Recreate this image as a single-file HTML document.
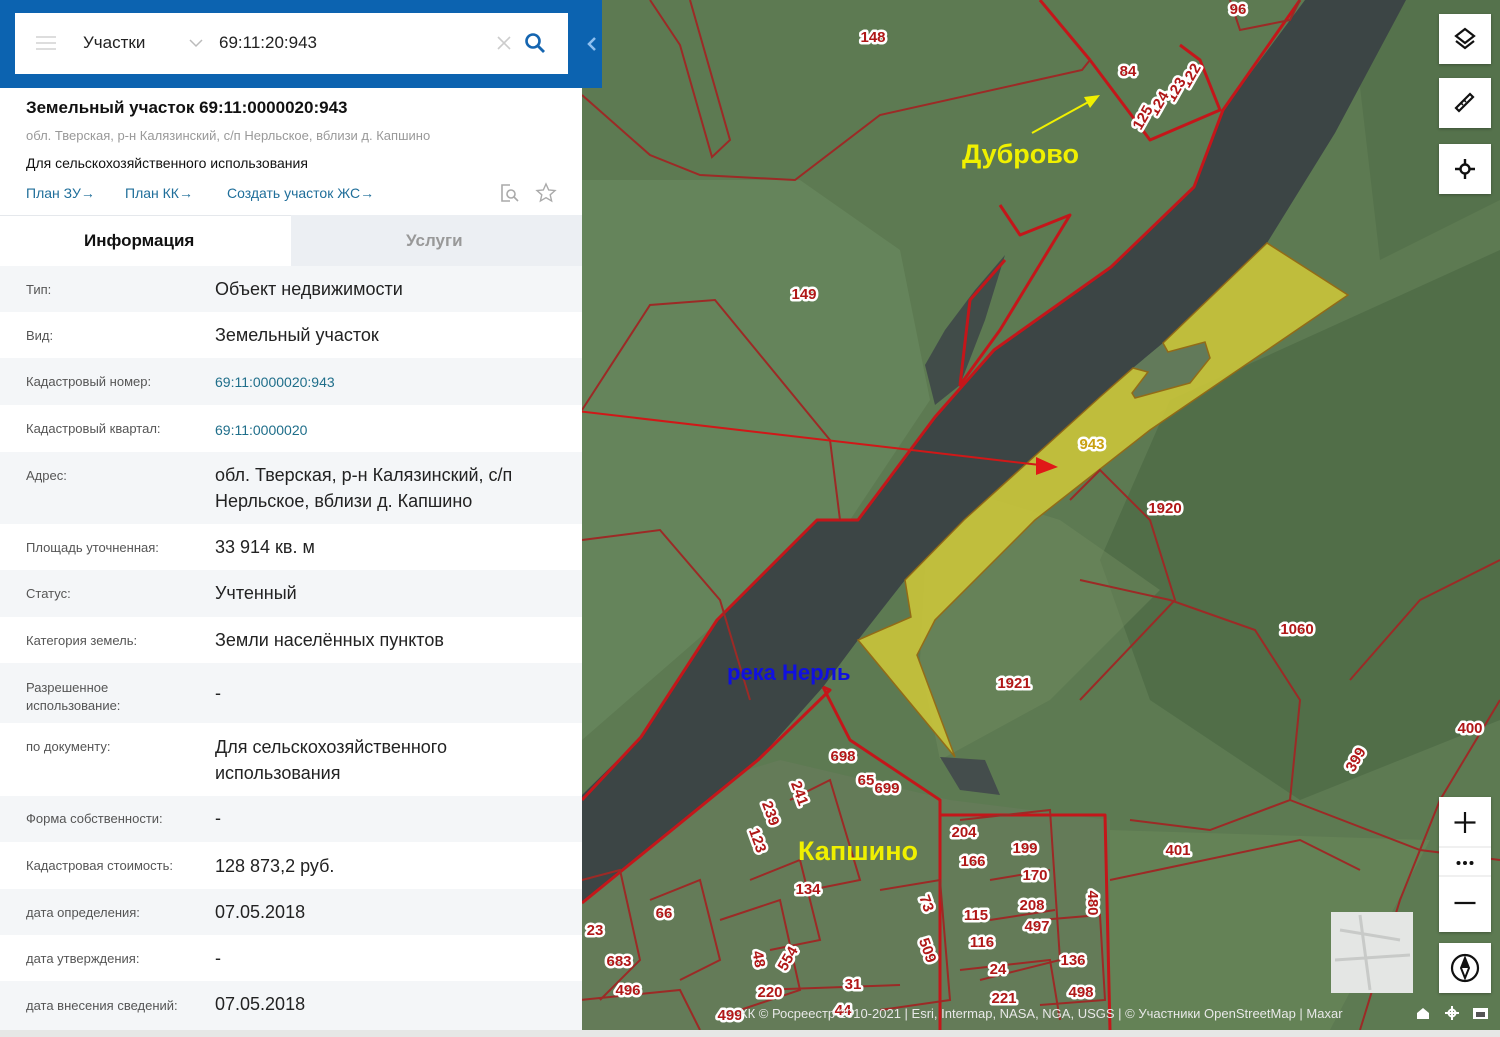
<!DOCTYPE html>
<html><head><meta charset="utf-8"><style>
*{margin:0;padding:0;box-sizing:border-box}
body{width:1500px;height:1037px;overflow:hidden;position:relative;font-family:"Liberation Sans","DejaVu Sans",sans-serif;background:#e8e8e8}
#map{position:absolute;left:0;top:0}
#panel{position:absolute;left:0;top:0;width:582px;height:1030px;background:#fff}
#top{position:absolute;left:0;top:0;width:602px;height:88px;background:#0c63b0}
#search{position:absolute;left:15px;top:13px;width:553px;height:61px;background:#fff}
.t{position:absolute;white-space:nowrap}
.row{position:absolute;left:0;width:582px}
.row .l{position:absolute;left:26px;font-size:13px;color:#555}
.row .v{position:absolute;left:215px;font-size:18px;color:#222;line-height:26px}
.g{background:#f4f6f8}
.ctl{position:absolute;left:1439px;width:52px;background:#fff;box-shadow:0 1px 3px rgba(0,0,0,.3)}
</style></head><body>
<svg id="map" width="1500" height="1037" viewBox="0 0 1500 1037">
<rect x="0" y="0" width="1500" height="1037" fill="#5d7a52"/>
<polygon points="582,180 800,180 900,250 930,400 850,520 720,620 582,740" fill="#6a8960" opacity=".7"/>
<polygon points="1170,400 1500,250 1500,720 1300,800 1150,700 1100,560" fill="#4a6642" opacity=".6"/>
<polygon points="1350,0 1500,0 1500,200 1380,260" fill="#4d6a45" opacity=".5"/>
<polygon points="930,480 1060,520 1160,590 1050,700 940,760 920,660" fill="#6f8a5e" opacity=".5"/>
<polygon points="582,820 780,760 950,800 1110,820 1110,1030 582,1030" fill="#6a7c5c" opacity=".55"/>
<polygon points="1110,830 1430,840 1330,1030 1110,1030" fill="#6b8a5a" opacity=".5"/>
<!-- river -->
<polygon points="1305,0 1406,0 1335,133 1267,243 1163,343 1133,368 1100,397 964,520 905,580 858,640 823,687 758,760 582,903 582,795 641,737 717,620 817,520 858,520 935,417 994,350 1111,267 1194,187 1223,110" fill="#3c4545"/>
<polygon points="1005,255 975,290 945,330 925,365 935,405 960,385 985,320" fill="#414c49"/>
<polygon points="1133,368 1148,372 1132,393 1135,398 1190,383 1210,358 1205,342 1168,352 1163,343" fill="#627a5a"/>
<polygon points="940,757 985,760 1000,795 960,790" fill="#444d4c"/>
<!-- yellow parcel -->
<polygon points="1267,243 1348,295 1150,430 1035,520 935,620 917,655 955,757 858,640 911,617 905,580 964,520 1100,397 1133,368 1148,372 1132,393 1135,398 1190,383 1210,358 1205,342 1168,352 1163,343" fill="#cdc73a" opacity=".88" stroke="#9a6a10" stroke-width="1.5"/>
<g fill="none" stroke="#c4161a" stroke-width="3" stroke-linejoin="round">
<polyline points="1300,0 1223,110 1194,187 1111,267 994,350 935,417 858,520 817,520 717,620 641,737 582,800"/>
<polyline points="1090,60 1150,140 1220,110 1200,60 1180,45"/>
<polyline points="1040,0 1090,60"/>
<polyline points="1000,205 1020,235 1070,215 1000,330 960,385 970,300 1005,260"/>
<polyline points="823,687 830,690 758,760 582,903"/>
<polyline points="823,687 850,740 940,800 940,815 1105,815 1110,1030"/>
<polyline points="940,815 940,1030"/>
</g>
<g fill="none" stroke="#9c2a26" stroke-width="2">
<polyline points="650,0 680,45 712,157 730,140 690,0"/>
<polyline points="582,95 650,155 700,175 795,180 880,115 1082,70 1090,60"/>
<polyline points="582,410 650,305 715,300 830,440 840,520"/>
<polyline points="582,540 660,530 720,600 750,700"/>
<polyline points="1070,500 1100,470 1150,520 1175,600 1080,700"/>
<polyline points="1080,580 1170,600 1255,630 1300,700 1290,800 1210,830 1130,820"/>
<polyline points="1350,680 1420,600 1500,560"/>
<polyline points="1500,700 1440,800 1400,900 1360,1030"/>
<polyline points="1290,800 1420,850 1500,860"/>
<polyline points="1110,880 1300,840 1360,870"/>
<polyline points="1230,0 1240,30 1290,20 1300,0"/>
<polyline points="582,880 620,870 640,960 600,1000"/>
<polyline points="650,900 700,880 720,960 680,980"/>
<polyline points="750,880 800,860 820,940 770,950"/>
<polyline points="790,800 830,780 860,880 810,890"/>
<polyline points="720,920 780,900 800,990 740,1010"/>
<polyline points="880,890 940,880 950,1000 880,1010"/>
<polyline points="960,820 1050,810 1060,960 980,980"/>
<polyline points="990,880 1050,870"/>
<polyline points="990,920 1055,910"/>
<polyline points="960,970 1050,960 1060,1020"/>
<polyline points="1040,920 1100,915 1105,1000 1040,1005"/>
<polyline points="760,990 900,985"/>
<polyline points="580,1000 680,990 700,1030"/>
</g>
<g font-family="Liberation Sans,sans-serif" font-size="15" font-weight="bold" fill="#b01818" stroke="#fff" stroke-width="5" stroke-linejoin="round" paint-order="stroke" text-anchor="middle">
<text x="873" y="42">148</text><text x="1128" y="76">84</text><text x="804" y="299">149</text>
<text x="1238" y="14">96</text><text x="1195" y="78" transform="rotate(-60 1195 78)">122</text>
<text x="1180" y="92" transform="rotate(-60 1180 92)">123</text><text x="1163" y="106" transform="rotate(-60 1163 106)">124</text><text x="1147" y="120" transform="rotate(-60 1147 120)">125</text>
<text x="1092" y="449" fill="#c9a012">943</text>
<text x="1165" y="513">1920</text><text x="1297" y="634">1060</text><text x="1014" y="688">1921</text><text x="1470" y="733">400</text>
<text x="1360" y="762" transform="rotate(-60 1360 762)">399</text><text x="1178" y="855">401</text>
<text x="843" y="761">698</text><text x="866" y="785">65</text><text x="887" y="793">699</text>
<text x="795" y="795" transform="rotate(70 795 795)">241</text><text x="766" y="815" transform="rotate(70 766 815)">239</text><text x="753" y="842" transform="rotate(70 753 842)">123</text>
<text x="964" y="837">204</text><text x="1025" y="853">199</text><text x="973" y="866">166</text><text x="1035" y="880">170</text><text x="1032" y="910">208</text><text x="1037" y="931">497</text>
<text x="1088" y="903" transform="rotate(90 1088 903)">480</text><text x="808" y="894">134</text><text x="664" y="918">66</text>
<text x="922" y="905" transform="rotate(70 922 905)">73</text><text x="976" y="920">115</text><text x="982" y="947">116</text><text x="998" y="974">24</text>
<text x="1073" y="965">136</text><text x="1081" y="997">498</text><text x="1004" y="1003">221</text><text x="923" y="952" transform="rotate(70 923 952)">509</text>
<text x="754" y="960" transform="rotate(80 754 960)">48</text><text x="792" y="961" transform="rotate(-60 792 961)">554</text><text x="853" y="989">31</text>
<text x="770" y="997">220</text><text x="595" y="935">23</text><text x="619" y="966">683</text><text x="628" y="995">496</text><text x="843" y="1015">44</text><text x="730" y="1020">499</text>
</g>
<g font-family="Liberation Sans,sans-serif" font-weight="bold">
<text x="962" y="163" font-size="27" fill="#f0f000">Дуброво</text>
<text x="798" y="860" font-size="27" fill="#f0f000">Капшино</text>
<text x="727" y="680" font-size="22" fill="#1010e0">река Нерль</text>
</g>
<line x1="1032" y1="133" x2="1092" y2="100" stroke="#f0f000" stroke-width="2"/>
<polygon points="1100,95 1084,97 1090,108" fill="#f0f000"/>
<line x1="362" y1="386" x2="1040" y2="465" stroke="#d01818" stroke-width="2"/>
<polygon points="1058,467 1036,457 1036,475" fill="#e01818"/>
<rect x="1331" y="912" width="82" height="81" fill="#e4e6e4"/>
<path d="M1335,960 L1410,955 M1360,915 L1370,990 M1340,930 L1400,940" stroke="#c8cac8" stroke-width="3"/>
<text x="740" y="1018" font-family="Liberation Sans,sans-serif" font-size="13" fill="#e8e8e8">КК © Росреестр 2010-2021 | Esri, Intermap, NASA, NGA, USGS | © Участники OpenStreetMap | Maxar</text>
<path d="M1417,1019 v-6 l6,-5 6,5 v6 z" fill="#fff"/>
<circle cx="1452" cy="1013" r="3.5" fill="none" stroke="#fff" stroke-width="2"/><path d="M1445,1013h14M1452,1006v14" stroke="#fff" stroke-width="2"/>
<rect x="1473" y="1008" width="15" height="11" fill="#fff"/><rect x="1476" y="1012" width="9" height="5" fill="#555"/>
<rect x="0" y="1030" width="1500" height="7" fill="#e6e7e6"/>
</svg>

<div id="panel">
<div class="t" style="left:26px;top:98px;font-size:17px;font-weight:bold;color:#111">Земельный участок 69:11:0000020:943</div>
<div class="t" style="left:26px;top:128px;font-size:13px;color:#999">обл. Тверская, р-н Калязинский, с/п Нерльское, вблизи д. Капшино</div>
<div class="t" style="left:26px;top:155px;font-size:14px;color:#111">Для сельскохозяйственного использования</div>
<div class="t" style="left:26px;top:185px;font-size:14px;color:#1f6e9a">План ЗУ→</div>
<div class="t" style="left:125px;top:185px;font-size:14px;color:#1f6e9a">План КК→</div>
<div class="t" style="left:227px;top:185px;font-size:14px;color:#1f6e9a">Создать участок ЖС→</div>
<svg class="t" style="left:500px;top:182px" width="60" height="22"><path d="M10,3h-8v16h8" fill="none" stroke="#aaa" stroke-width="1.6"/><circle cx="11" cy="12" r="4" fill="none" stroke="#aaa" stroke-width="1.6"/><path d="M14,15l4,4" stroke="#aaa" stroke-width="1.6"/><path d="M46,2l2.7,6 6.3,.6-4.8,4.2 1.4,6.2-5.6-3.3-5.6,3.3 1.4-6.2-4.8-4.2 6.3-.6z" fill="none" stroke="#aaa" stroke-width="1.4"/></svg>
<div style="position:absolute;left:0;top:215px;width:291px;height:51px;background:#fff;border-top:1px solid #e5e8ec"></div>
<div style="position:absolute;left:291px;top:215px;width:291px;height:51px;background:#eceff3"></div>
<div class="t" style="left:84px;top:231px;font-size:17px;font-weight:bold;color:#111">Информация</div>
<div class="t" style="left:406px;top:231px;font-size:17px;font-weight:bold;color:#999">Услуги</div>

<div class="row g" style="top:266px;height:46px"><span class="l" style="top:16px">Тип:</span><span class="v" style="top:10px">Объект недвижимости</span></div>
<div class="row" style="top:312px;height:46px"><span class="l" style="top:16px">Вид:</span><span class="v" style="top:10px">Земельный участок</span></div>
<div class="row g" style="top:358px;height:47px"><span class="l" style="top:16px">Кадастровый номер:</span><span class="v" style="top:11px;font-size:14px;color:#1f6e8a">69:11:0000020:943</span></div>
<div class="row" style="top:405px;height:47px"><span class="l" style="top:16px">Кадастровый квартал:</span><span class="v" style="top:12px;font-size:14px;color:#1f6e8a">69:11:0000020</span></div>
<div class="row g" style="top:452px;height:72px"><span class="l" style="top:16px">Адрес:</span><span class="v" style="top:10px">обл. Тверская, р-н Калязинский, с/п<br>Нерльское, вблизи д. Капшино</span></div>
<div class="row" style="top:524px;height:46px"><span class="l" style="top:16px">Площадь уточненная:</span><span class="v" style="top:10px">33 914 кв. м</span></div>
<div class="row g" style="top:570px;height:47px"><span class="l" style="top:16px">Статус:</span><span class="v" style="top:10px">Учтенный</span></div>
<div class="row" style="top:617px;height:46px"><span class="l" style="top:16px">Категория земель:</span><span class="v" style="top:10px">Земли населённых пунктов</span></div>
<div class="row g" style="top:663px;height:60px"><span class="l" style="top:16px;line-height:18px">Разрешенное<br>использование:</span><span class="v" style="top:17px">-</span></div>
<div class="row" style="top:723px;height:73px"><span class="l" style="top:16px">по документу:</span><span class="v" style="top:11px">Для сельскохозяйственного<br>использования</span></div>
<div class="row g" style="top:796px;height:46px"><span class="l" style="top:15px">Форма собственности:</span><span class="v" style="top:9px">-</span></div>
<div class="row" style="top:842px;height:47px"><span class="l" style="top:16px">Кадастровая стоимость:</span><span class="v" style="top:11px">128 873,2 руб.</span></div>
<div class="row g" style="top:889px;height:46px"><span class="l" style="top:16px">дата определения:</span><span class="v" style="top:10px">07.05.2018</span></div>
<div class="row" style="top:935px;height:46px"><span class="l" style="top:16px">дата утверждения:</span><span class="v" style="top:10px">-</span></div>
<div class="row g" style="top:981px;height:49px"><span class="l" style="top:17px">дата внесения сведений:</span><span class="v" style="top:10px">07.05.2018</span></div>
</div>

<div id="top"><div id="search">
<div style="position:absolute;left:21px;top:23px;width:20px;height:2px;background:#ddd;box-shadow:0 6px 0 #ddd,0 12px 0 #ddd"></div>
<div class="t" style="left:68px;top:20px;font-size:17px;color:#222">Участки</div>
<svg class="t" style="left:174px;top:25px" width="14" height="10"><path d="M1,2l6,6 6-6" fill="none" stroke="#bbb" stroke-width="1.5"/></svg>
<div class="t" style="left:204px;top:20px;font-size:17px;color:#222">69:11:20:943</div>
<svg class="t" style="left:481px;top:22px" width="16" height="16"><path d="M2,2l12,12M14,2l-12,12" stroke="#ccc" stroke-width="1.6"/></svg>
<svg class="t" style="left:509px;top:19px" width="24" height="24"><circle cx="9" cy="9" r="6.5" fill="none" stroke="#1565b0" stroke-width="2.6"/><path d="M14,14l6,6" stroke="#1565b0" stroke-width="2.8"/></svg>
</div>
<svg class="t" style="left:586px;top:36px" width="12" height="16"><path d="M9,2l-6,6 6,6" fill="none" stroke="#8fc0f0" stroke-width="2.5"/></svg>
</div>

<div class="ctl" style="top:14px;height:50px"><svg width="52" height="50"><path d="M26,15l-9,7 9,7 9-7z" fill="none" stroke="#111" stroke-width="2.2"/><path d="M17,27l9,7 9-7" fill="none" stroke="#111" stroke-width="2.2"/></svg></div>
<div class="ctl" style="top:78px;height:50px"><svg width="52" height="50"><path d="M20,33l-3-3 14-14 3,3z" fill="none" stroke="#111" stroke-width="2.2"/><path d="M22,25l2,2M25,22l2,2" stroke="#111" stroke-width="1.6"/></svg></div>
<div class="ctl" style="top:144px;height:50px"><svg width="52" height="50"><circle cx="26" cy="25" r="4.5" fill="none" stroke="#111" stroke-width="2.4"/><path d="M26,15v6M26,29v6M16,25h6M30,25h6" stroke="#111" stroke-width="2.4"/></svg></div>
<div class="ctl" style="top:797px;height:135px"><svg width="52" height="135"><path d="M26,15v21M15.5,25.5h21" stroke="#111" stroke-width="2.2"/><line x1="0" y1="50" x2="52" y2="50" stroke="#e2e2e2"/><circle cx="19.5" cy="66" r="2" fill="#111"/><circle cx="26" cy="66" r="2" fill="#111"/><circle cx="32.5" cy="66" r="2" fill="#111"/><line x1="0" y1="79" x2="52" y2="79" stroke="#e2e2e2"/><path d="M15.5,106h21" stroke="#111" stroke-width="2.2"/></svg></div>
<div class="ctl" style="top:943px;height:50px"><svg width="52" height="50"><circle cx="26" cy="25" r="13" fill="none" stroke="#111" stroke-width="2.2"/><path d="M26,15l4,10-4,10-4-10z" fill="none" stroke="#111" stroke-width="2"/><path d="M26,15l4,10h-8z" fill="#111"/></svg></div>
</body></html>
